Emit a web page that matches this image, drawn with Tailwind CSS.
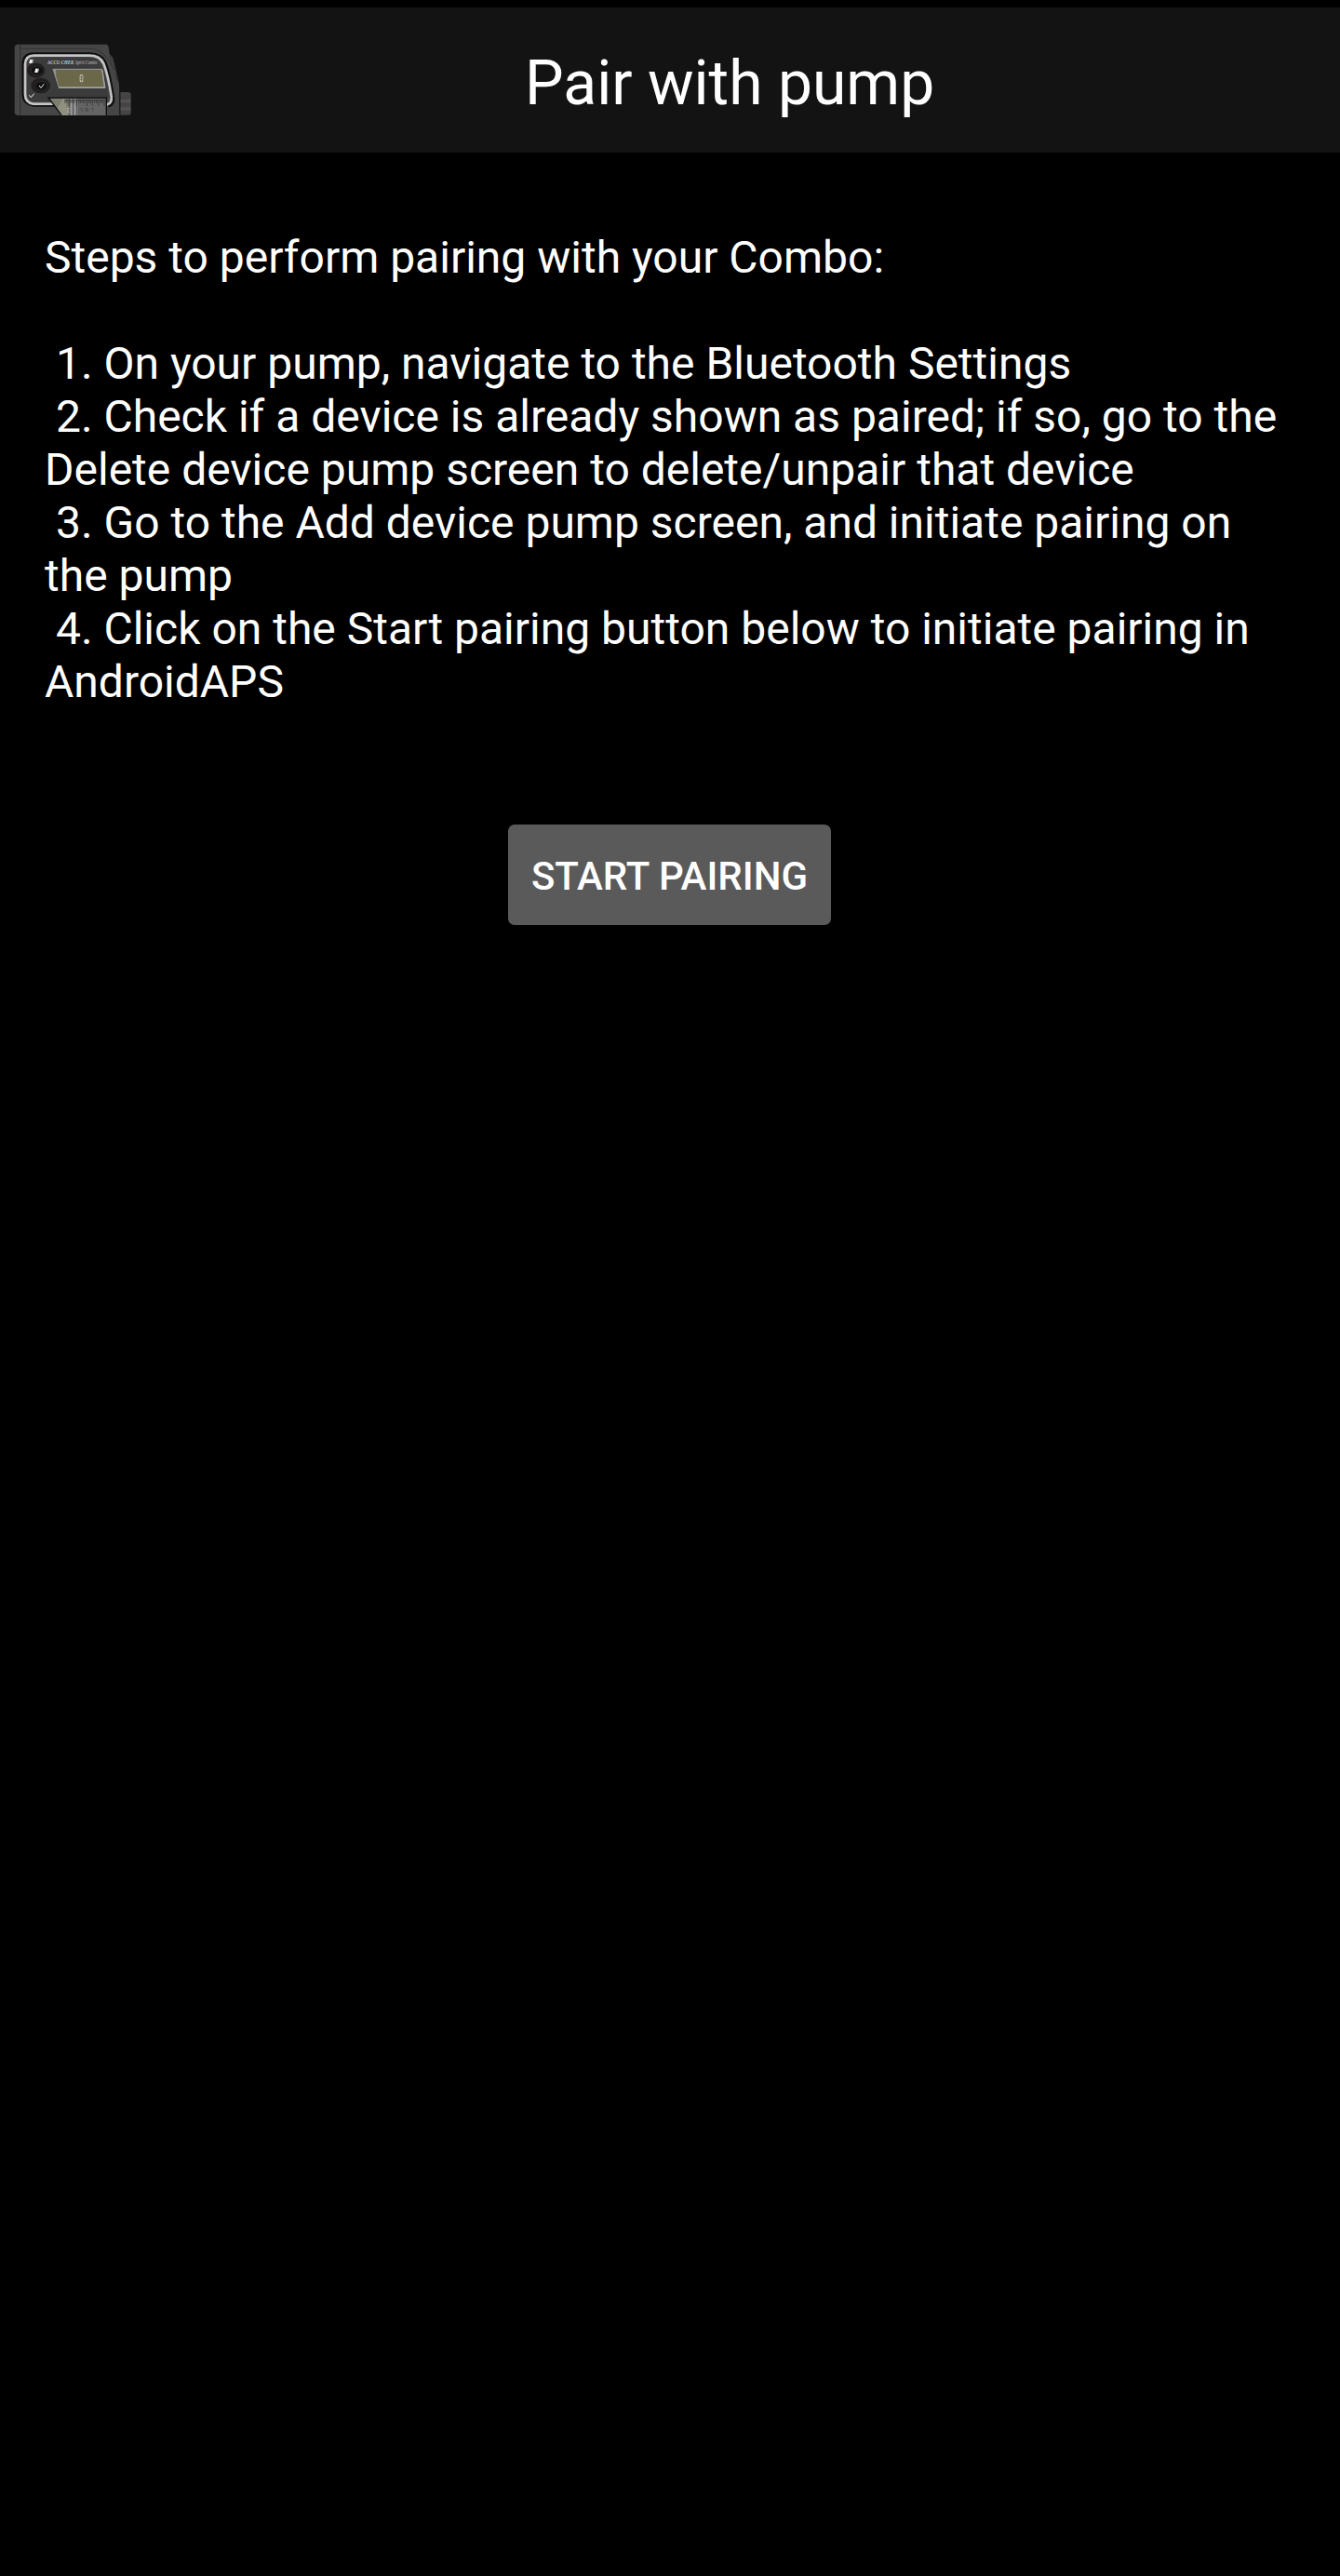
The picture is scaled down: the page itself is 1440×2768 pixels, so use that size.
<!DOCTYPE html>
<html lang="en">
<head>
<meta charset="utf-8">
<title>Pair with pump</title>
<script src="https://cdn.jsdelivr.net/npm/@tailwindcss/browser@4"></script>
</head>
<body class="bg-black text-white font-['Roboto',sans-serif]">
<div class="flex flex-col min-h-[2768px] pt-2">
  <header class="flex items-center h-[156px] bg-[#131313] pl-[15px]">
    <svg class="w-[126px] h-[78px] shrink-0" viewBox="45 141 378 234" aria-label="Insulin pump">
      <path d="M58 143H344Q349 145 351 157L353 175L362 183L369 205L376 235L384 272L387 372H58Q47 372 47 360V155Q47 143 58 143Z" fill="#464646"/>
      <path d="M65 144V371" stroke="#222" stroke-width="2"/>
      <path d="M67 157H305L335 175L354 197L368 227M355 180L362 200M366 201L373 230M371 234L379 260" fill="none" stroke="#292929" stroke-width="2"/>
      <path d="M388 297H414Q422 297 422 305V364Q422 371 414 371H388Z" fill="#454343"/>
      <path d="M389 321H421V331H389ZM389 346H421V356H389Z" fill="#565252"/>
      <path d="M386 296V371" stroke="#1c1c1c" stroke-width="3"/>
      <path d="M196 337H107Q78 332 77 306V205Q78 177 107 176H290Q325 177 337 202C350 235 356 270 362 310Q367 335 348 340" fill="none" stroke="#101010" stroke-width="14"/>
      <path d="M196 335H107Q81 331 81 304V207Q82 179 109 179H288Q322 179 334 205C346 236 353 272 359 310Q362 333 345 337" fill="none" stroke="#c6c6c6" stroke-width="8"/>
      <path d="M190 328H112Q88 326 88 302V210Q88 186 113 185H286Q314 185 325 207C337 235 344 270 350 314" fill="#3b3b3b"/>
      <ellipse cx="116" cy="227" rx="29" ry="24" fill="#211e1f"/>
      <ellipse cx="131" cy="276" rx="31" ry="25" fill="#211e1f"/>
      <ellipse cx="120" cy="227" rx="20" ry="14" fill="#111" stroke="#343132" stroke-width="2"/>
      <ellipse cx="133" cy="277" rx="20" ry="15" fill="#111" stroke="#343132" stroke-width="2"/>
      <path d="M97 192H108L105 204H94ZM115 221H126L123 234H112Z" fill="#bdbdbd"/>
      <path d="M97 192H103L100 204H94ZM115 221H121L118 234H112Z" fill="#fff"/>
      <path d="M126 276L132 283L142 271M94 307L100 314L110 302" fill="none" stroke="#f4f4f4" stroke-width="3"/>
      <text x="153" y="207" font-family="Liberation Serif, serif" font-style="italic" font-weight="700" font-size="16" fill="#c8c8c8" textLength="85" lengthAdjust="spacingAndGlyphs">ACCU-CHEK</text>
      <text x="243" y="207" font-family="Liberation Serif, serif" font-style="italic" font-size="16" fill="#c0c0c0" textLength="70" lengthAdjust="spacingAndGlyphs">Spirit Combo</text>
      <path d="M167 220H326Q333 220 334 228L341 286H188Z" fill="#8f8f8f" stroke="#252525" stroke-width="2"/>
      <path d="M180 225H324Q328 226 329 232L334 279H190L181 246Z" fill="#6b684a"/>
      <path d="M329 226L339 283H190" fill="none" stroke="#a8a8a8" stroke-width="3"/>
      <rect x="257" y="240" width="11" height="25" rx="5" fill="#c9c7b4"/>
      <path d="M259 246L266 257L262 262V243L266 248L259 258" fill="none" stroke="#55533e" stroke-width="2"/>
      <path d="M155 313H344V372H198Z" fill="#636363"/>
      <path d="M159 316H222V371H198Z" fill="#7e7e70"/>
      <path d="M204 316Q217 327 213 342L220 371H198L184 350Z" fill="#919181"/>
      <path d="M222 316H251V371H222Z" fill="#858585"/>
      <path d="M224 317V371M236 317V371M248 317V371" stroke="#555" stroke-width="3"/>
      <path d="M230 317V371M242 317V371" stroke="#a2a2a2" stroke-width="3"/>
      <path d="M216 349H224M216 355H222M216 361H224" stroke="#b5b5a5" stroke-width="3"/>
      <path d="M208 323H340M210 323V333M216 323V333M222 323V341M228 323V333M234 323V333M240 323V333M247 323V341M254 323V333M260 323V333M267 323V333M273 323V333M280 323V342M286 323V333M292 323V333M298 323V341M305 323V333M311 323V333M317 323V341M324 323V333M330 323V333M336 323V341" fill="none" stroke="#292929" stroke-width="2"/>
      <path d="M259 350H266M262 357H267M283 349H277V357H284V353M294 350H302M297 357H301" fill="none" stroke="#353535" stroke-width="2"/>
      <path d="M198 371L156 315H343V371" fill="none" stroke="#0c0c0c" stroke-width="4"/>
    </svg>
    <h1 class="ml-[423px] mt-[7px] text-[66px] leading-[78px] whitespace-nowrap">Pair with pump</h1>
  </header>
  <main class="flex flex-col items-center pt-[84px]">
    <p class="w-full px-12 text-[48px] leading-[57px] whitespace-pre">Steps to perform pairing with your Combo:

 1. On your pump, navigate to the Bluetooth Settings
 2. Check if a device is already shown as paired; if so, go to the
Delete device pump screen to delete/unpair that device
 3. Go to the Add device pump screen, and initiate pairing on
the pump
 4. Click on the Start pairing button below to initiate pairing in
AndroidAPS</p>
    <button class="mt-[125px] mr-px w-[347px] h-[108px] pt-[3px] rounded-[7px] bg-[#5a5a5b] text-[42px] font-medium whitespace-nowrap">START PAIRING</button>
  </main>
</div>
</body>
</html>
